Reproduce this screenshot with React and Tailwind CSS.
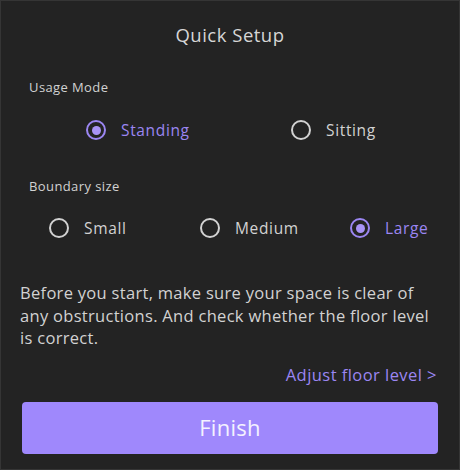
import React from 'react';

const purple = 'text-[#9b86f2]';

const Radio = ({ label, checked }) => (
  <div className="flex items-center">
    <span
      className={`flex h-[20px] w-[20px] items-center justify-center rounded-full border-2 ${
        checked ? 'border-[#9b86f2]' : 'border-[#d2d2d2]'
      }`}
    >
      {checked && <span className="h-[9px] w-[9px] rounded-full bg-[#a893f5]" />}
    </span>
    <span
      className={`ml-[15px] text-[15.5px] leading-[22px] tracking-[0.65px] ${checked ? purple : 'text-[#d2d2d2]'}`}
    >
      {label}
    </span>
  </div>
);

const App = () => {
  return (
    <div
      className="h-[470px] w-[460px] border border-[#353535] bg-[#232323] text-[#d2d2d2]"
      style={{ fontFamily: '"Open Sans", "Noto Sans", sans-serif' }}
    >
      <h1 className="pt-[22px] text-center text-[18.5px] leading-[24px] tracking-[0.5px] text-[#d6d6d6]">
        Quick Setup
      </h1>

      <p className="mt-[31px] pl-[28px] text-[13px] leading-[18px] tracking-[0.4px]">Usage Mode</p>
      <div className="mt-[23px] flex pl-[85px]">
        <div className="w-[205px]">
          <Radio label="Standing" checked />
        </div>
        <Radio label="Sitting" />
      </div>

      <p className="mt-[36px] pl-[28px] text-[13px] leading-[18px] tracking-[0.4px]">Boundary size</p>
      <div className="mt-[22px] flex pl-[48px]">
        <div className="w-[151px]">
          <Radio label="Small" />
        </div>
        <div className="w-[150px]">
          <Radio label="Medium" />
        </div>
        <Radio label="Large" checked />
      </div>

      <p className="mt-[43px] pl-[19px] pr-[14px] text-[16.5px] leading-[22.5px] tracking-[0.3px]">
        Before you start, make sure your space is clear of any obstructions. And check whether the floor level is
        correct.
      </p>

      <div
        className={`mt-[14px] pr-[22px] text-right text-[16.5px] leading-[22px] tracking-[0.45px] ${purple}`}
      >
        Adjust floor level &gt;
      </div>

      <div className="px-[21px] pt-[16px]">
        <button className="flex h-[52px] w-full items-center justify-center rounded-[4px] bg-[#9f88fc] text-[22px] tracking-[0.3px] text-[#f4f2ff]">
          Finish
        </button>
      </div>
    </div>
  );
};

export default App;
